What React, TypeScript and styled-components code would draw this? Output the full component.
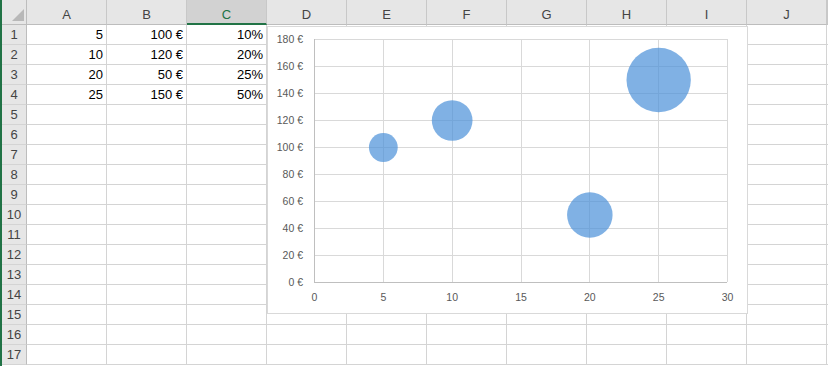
import styled, { createGlobalStyle } from "styled-components";

const GlobalStyle = createGlobalStyle`
  html, body {
    margin: 0;
    padding: 0;
    background: #ffffff;
  }
  body {
    font-family: "Liberation Sans", Arial, sans-serif;
  }
`;

const COLS = ["A", "B", "C", "D", "E", "F", "G", "H", "I", "J"];
const ROWS = 17;

const data: { a: string; b: string; c: string }[] = [
  { a: "5", b: "100 €", c: "10%" },
  { a: "10", b: "120 €", c: "20%" },
  { a: "20", b: "50 €", c: "25%" },
  { a: "25", b: "150 €", c: "50%" },
];

const bubbles = [
  { x: 5, y: 100, size: 0.1 },
  { x: 10, y: 120, size: 0.2 },
  { x: 20, y: 50, size: 0.25 },
  { x: 25, y: 150, size: 0.5 },
];

const Sheet = styled.div`
  position: relative;
  width: 828px;
  height: 366px;
  overflow: hidden;
  border-left: 2px solid #217346;
  box-sizing: border-box;
`;

const Grid = styled.div`
  display: grid;
  grid-template-columns: 25px repeat(10, 80px) 1fr;
  grid-template-rows: 25px repeat(17, 20px) 1fr;
`;

const Corner = styled.div`
  position: relative;
  background: #e6e6e6;
  border-right: 1px solid #bdbdbd;
  border-bottom: 1px solid #bdbdbd;
  box-sizing: border-box;

  &::after {
    content: "";
    position: absolute;
    right: 2px;
    bottom: 3px;
    width: 12px;
    height: 12px;
    background: #b8b8b8;
    clip-path: polygon(100% 0, 100% 100%, 0 100%);
  }
`;

const ColHead = styled.div<{ $active?: boolean }>`
  display: flex;
  align-items: center;
  justify-content: center;
  padding-top: 5px;
  box-sizing: border-box;
  background: ${(p) => (p.$active ? "#d2d2d2" : "#e6e6e6")};
  border-right: 1px solid #c8c8c8;
  border-bottom: ${(p) => (p.$active ? "2px solid #217346" : "1px solid #bdbdbd")};
  color: ${(p) => (p.$active ? "#217346" : "#444444")};
  font-size: 13px;
`;

const RowHead = styled.div`
  display: flex;
  align-items: flex-end;
  justify-content: center;
  padding-bottom: 2px;
  box-sizing: border-box;
  background: #e6e6e6;
  border-right: 1px solid #bdbdbd;
  border-bottom: 1px solid #d4d4d4;
  color: #444444;
  font-size: 13px;
`;

const Cell = styled.div`
  display: flex;
  align-items: flex-end;
  justify-content: flex-end;
  padding: 0 3px 2px 0;
  box-sizing: border-box;
  border-right: 1px solid #d4d4d4;
  border-bottom: 1px solid #d4d4d4;
  color: #000000;
  font-size: 13px;
  white-space: nowrap;
`;

const Filler = styled.div`
  border-bottom: 1px solid #d4d4d4;
`;

const ChartBox = styled.div`
  position: absolute;
  left: 265px;
  top: 26px;
  width: 481px;
  height: 288px;
  background: #ffffff;
  border: 1px solid #d9d9d9;
  box-sizing: border-box;
`;

const AxisLabel = styled.text`
  font-family: "Liberation Sans", Arial, sans-serif;
  font-size: 10.5px;
  fill: #595959;
`;

// plot area inside the chart box
const PL = 46;
const PT = 12;
const PW = 413;
const PH = 243;
const sx = (v: number) => PL + (v / 30) * PW;
const sy = (v: number) => PT + PH - (v / 180) * PH;

function BubbleChart() {
  const yTicks = [0, 20, 40, 60, 80, 100, 120, 140, 160, 180];
  const xTicks = [0, 5, 10, 15, 20, 25, 30];
  return (
    <ChartBox>
      <svg width="479" height="286" viewBox="0 0 479 286">
        {yTicks.map((t) => (
          <line key={"gy" + t} x1={PL} x2={PL + PW} y1={Math.round(sy(t)) + 0.5} y2={Math.round(sy(t)) + 0.5} stroke="#d9d9d9" strokeWidth="1" />
        ))}
        {xTicks.map((t) => (
          <line key={"gx" + t} x1={Math.round(sx(t)) + 0.5} x2={Math.round(sx(t)) + 0.5} y1={PT} y2={PT + PH} stroke="#d9d9d9" strokeWidth="1" />
        ))}
        <line x1={PL + 0.5} x2={PL + 0.5} y1={PT} y2={PT + PH + 0.5} stroke="#bfbfbf" />
        <line x1={PL} x2={PL + PW} y1={PT + PH + 0.5} y2={PT + PH + 0.5} stroke="#bfbfbf" />
        {bubbles.map((b) => (
          <circle
            key={b.x}
            cx={sx(b.x) + 0.5}
            cy={sy(b.y) + 0.5}
            r={45.5 * Math.sqrt(b.size)}
            fill="#4a90d9"
            fillOpacity="0.7"
          />
        ))}
        {yTicks.map((t) => (
          <AxisLabel key={"ly" + t} x={35} y={sy(t) + 4} textAnchor="end">
            {t} €
          </AxisLabel>
        ))}
        {xTicks.map((t) => (
          <AxisLabel key={"lx" + t} x={sx(t) + 0.5} y={274} textAnchor="middle">
            {t}
          </AxisLabel>
        ))}
      </svg>
    </ChartBox>
  );
}

export default function App() {
  const rows = Array.from({ length: ROWS }, (_, i) => i + 1);
  return (
    <>
      <GlobalStyle />
      <Sheet>
        <Grid>
          <Corner />
          {COLS.map((c) => (
            <ColHead key={c} $active={c === "C"}>
              {c}
            </ColHead>
          ))}
          <ColHead />
          {rows.map((r) => {
            const d = data[r - 1];
            return [
              <RowHead key={"h" + r}>{r}</RowHead>,
              ...COLS.map((c) => (
                <Cell key={c + r}>
                  {d && c === "A" ? d.a : d && c === "B" ? d.b : d && c === "C" ? d.c : null}
                </Cell>
              )),
              <Filler key={"f" + r} />,
            ];
          })}
        </Grid>
        <BubbleChart />
      </Sheet>
    </>
  );
}
